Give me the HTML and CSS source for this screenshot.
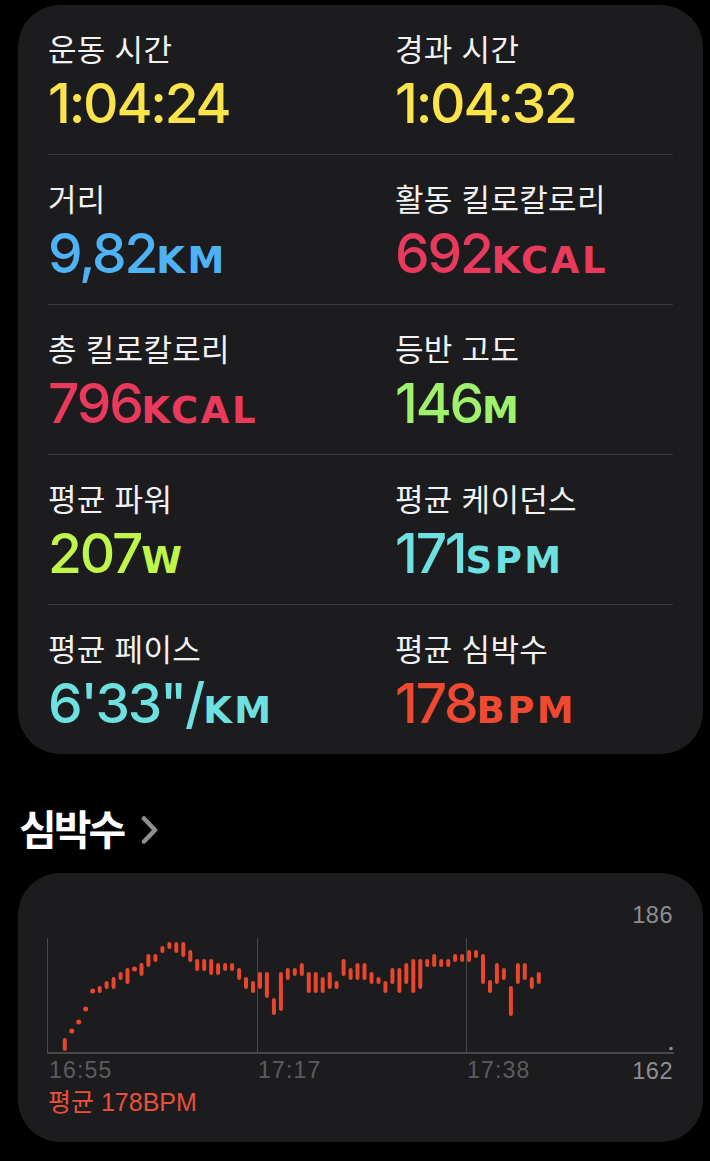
FILE: index.html
```html
<!DOCTYPE html>
<html lang="ko">
<head>
<meta charset="utf-8">
<title>운동 요약</title>
<link rel="stylesheet" href="styles.css">
</head>
<body>
<main class="page">
  <section class="stats">
    <div class="row">
      <div class="cell"><div class="label">운동 시간</div><div class="value c-yellow">1:04:24</div></div>
      <div class="cell"><div class="label">경과 시간</div><div class="value c-yellow">1:04:32</div></div>
    </div>
    <div class="row">
      <div class="cell"><div class="label">거리</div><div class="value c-blue">9,82<span class="unit">KM</span></div></div>
      <div class="cell"><div class="label">활동 킬로칼로리</div><div class="value c-pink">692<span class="unit">KCAL</span></div></div>
    </div>
    <div class="row">
      <div class="cell"><div class="label">총 킬로칼로리</div><div class="value c-pink">796<span class="unit">KCAL</span></div></div>
      <div class="cell"><div class="label">등반 고도</div><div class="value c-green">146<span class="unit">M</span></div></div>
    </div>
    <div class="row">
      <div class="cell"><div class="label">평균 파워</div><div class="value c-lime">207<span class="unit">W</span></div></div>
      <div class="cell"><div class="label">평균 케이던스</div><div class="value c-cyan">171<span class="unit">SPM</span></div></div>
    </div>
    <div class="row">
      <div class="cell"><div class="label">평균 페이스</div><div class="value c-cyan">6'33"/<span class="unit">KM</span></div></div>
      <div class="cell"><div class="label">평균 심박수</div><div class="value c-red">178<span class="unit">BPM</span></div></div>
    </div>
  </section>

  <h2 class="heading">심박수<svg class="chev" width="17" height="30" viewBox="0 0 17 30"><path d="M3 3.5 L14 15 L3 26.5" fill="none" stroke="#8e8e93" stroke-width="4.5" stroke-linecap="round" stroke-linejoin="round"/></svg></h2>

  <section class="chart-card">
    <svg class="chart" width="685" height="215" viewBox="0 0 685 215">
      <g transform="translate(-18 -873)">
        <g class="grid" stroke="#48484b" stroke-width="1">
          <line x1="47.5" y1="938" x2="47.5" y2="1053"/>
          <line x1="257.5" y1="938" x2="257.5" y2="1053"/>
          <line x1="466.5" y1="938" x2="466.5" y2="1053"/>
          <line x1="47" y1="1053" x2="674" y2="1053" stroke-width="2"/>
        </g>
        <circle cx="671" cy="1048.5" r="1.8" fill="#8e8e93"/>
        <g class="bars" fill="#e9472d" transform="translate(-0.2 0)">
          <rect x="63" y="1038" width="4" height="13" rx="2"/>
          <circle cx="72.0" cy="1031" r="2.5"/>
          <circle cx="78.9" cy="1022" r="2.5"/>
          <circle cx="85.9" cy="1009" r="2.5"/>
          <circle cx="92.9" cy="991" r="2.5"/>
          <rect x="97.9" y="986" width="4" height="7" rx="2"/>
          <rect x="104.8" y="981" width="4" height="8" rx="2"/>
          <rect x="111.8" y="977" width="4" height="12" rx="2"/>
          <rect x="118.8" y="972" width="4" height="8" rx="2"/>
          <rect x="125.7" y="968" width="4" height="16" rx="2"/>
          <circle cx="134.7" cy="969" r="2.5"/>
          <rect x="139.7" y="963" width="4" height="13" rx="2"/>
          <rect x="146.6" y="954" width="4" height="13" rx="2"/>
          <rect x="153.6" y="954" width="4" height="8" rx="2"/>
          <rect x="160.6" y="946" width="4" height="7" rx="2"/>
          <rect x="167.6" y="942" width="4" height="7" rx="2"/>
          <rect x="174.5" y="942" width="4" height="11" rx="2"/>
          <rect x="181.5" y="942" width="4" height="15" rx="2"/>
          <rect x="188.5" y="950" width="4" height="12" rx="2"/>
          <rect x="195.4" y="959" width="4" height="12" rx="2"/>
          <rect x="202.4" y="959" width="4" height="12" rx="2"/>
          <rect x="209.4" y="959" width="4" height="16" rx="2"/>
          <rect x="216.3" y="963" width="4" height="12" rx="2"/>
          <rect x="223.3" y="963" width="4" height="8" rx="2"/>
          <rect x="230.3" y="963" width="4" height="8" rx="2"/>
          <rect x="237.3" y="968" width="4" height="12" rx="2"/>
          <rect x="244.2" y="977" width="4" height="12" rx="2"/>
          <rect x="251.2" y="981" width="4" height="12" rx="2"/>
          <rect x="258.2" y="972" width="4" height="17" rx="2"/>
          <rect x="265.1" y="972" width="4" height="26" rx="2"/>
          <rect x="272.1" y="998" width="4" height="17" rx="2"/>
          <rect x="279.1" y="972" width="4" height="39" rx="2"/>
          <rect x="286.0" y="968" width="4" height="12" rx="2"/>
          <rect x="293.0" y="968" width="4" height="8" rx="2"/>
          <rect x="300.0" y="963" width="4" height="13" rx="2"/>
          <rect x="307.0" y="972" width="4" height="21" rx="2"/>
          <rect x="313.9" y="972" width="4" height="21" rx="2"/>
          <rect x="320.9" y="977" width="4" height="16" rx="2"/>
          <rect x="327.9" y="972" width="4" height="17" rx="2"/>
          <rect x="334.8" y="981" width="4" height="8" rx="2"/>
          <rect x="341.8" y="959" width="4" height="17" rx="2"/>
          <rect x="348.8" y="968" width="4" height="12" rx="2"/>
          <rect x="355.7" y="963" width="4" height="17" rx="2"/>
          <rect x="362.7" y="963" width="4" height="17" rx="2"/>
          <rect x="369.7" y="972" width="4" height="12" rx="2"/>
          <rect x="376.7" y="977" width="4" height="7" rx="2"/>
          <rect x="383.6" y="981" width="4" height="12" rx="2"/>
          <rect x="390.6" y="968" width="4" height="16" rx="2"/>
          <rect x="397.6" y="968" width="4" height="25" rx="2"/>
          <rect x="404.5" y="963" width="4" height="21" rx="2"/>
          <rect x="411.5" y="959" width="4" height="34" rx="2"/>
          <rect x="418.5" y="959" width="4" height="30" rx="2"/>
          <rect x="425.4" y="959" width="4" height="8" rx="2"/>
          <rect x="432.4" y="954" width="4" height="13" rx="2"/>
          <rect x="439.4" y="959" width="4" height="8" rx="2"/>
          <rect x="446.4" y="959" width="4" height="8" rx="2"/>
          <rect x="453.3" y="954" width="4" height="8" rx="2"/>
          <rect x="460.3" y="954" width="4" height="8" rx="2"/>
          <rect x="467.3" y="950" width="4" height="12" rx="2"/>
          <rect x="474.2" y="950" width="4" height="8" rx="2"/>
          <rect x="481.2" y="954" width="4" height="30" rx="2"/>
          <rect x="488.2" y="980" width="4" height="13" rx="2"/>
          <rect x="495.1" y="963" width="4" height="21" rx="2"/>
          <rect x="502.1" y="968" width="4" height="12" rx="2"/>
          <rect x="509.1" y="986" width="4" height="30" rx="2"/>
          <rect x="516.1" y="963" width="4" height="21" rx="2"/>
          <rect x="523.0" y="963" width="4" height="17" rx="2"/>
          <rect x="530.0" y="977" width="4" height="12" rx="2"/>
          <rect x="537.0" y="972" width="4" height="12" rx="2"/>
        </g>
        <text class="axis-max" x="673" y="923" text-anchor="end">186</text>
        <text class="axis-max" x="673" y="1079" text-anchor="end">162</text>
        <text class="axis-time" x="49" y="1078">16:55</text>
        <text class="axis-time" x="258" y="1078">17:17</text>
        <text class="axis-time" x="467" y="1078">17:38</text>
      </g>
    </svg>
    <p class="avg">평균 178BPM</p>
  </section>
</main>
</body>
</html>
```
FILE: styles.css
```css
* { box-sizing: border-box; }

body {
  margin: 0;
  background: #000;
  color: #f2f2f2;
  font-family: "Noto Sans CJK KR", sans-serif;
}

.page {
  padding: 5px 7px 0 18px;
}

.stats {
  background: #1c1c1e;
  border-radius: 42px;
  padding: 0 30px;
}

.row {
  display: grid;
  grid-template-columns: 347px 1fr;
  padding: 25px 0 21px;
  border-bottom: 1px solid #38383a;
}

.row:last-child {
  border-bottom: none;
}

.label {
  font: 400 31px/36px "Noto Sans CJK KR", sans-serif;
  letter-spacing: 0.3px;
  color: #f2f2f2;
}

.value {
  margin-top: 7px;
  font: 500 55px/60px Inter, Roboto, "Liberation Sans", sans-serif;
  letter-spacing: -2.2px;
  white-space: nowrap;
}

.unit {
  font: 700 37px/1 "DejaVu Sans", sans-serif;
  letter-spacing: 2.5px;
}

.c-yellow { color: #fbe34b; }
.c-blue { color: #4fb2f5; }
.c-pink { color: #e93a5b; }
.c-green { color: #9ff16d; }
.c-lime { color: #c0f54b; }
.c-cyan { color: #6de0df; }
.c-red { color: #ef4a31; }

.heading {
  display: flex;
  align-items: center;
  margin: 49px 0 22px 1px;
  font: 700 41px/48px "Noto Sans CJK KR", sans-serif;
  letter-spacing: -3px;
  color: #fff;
}

.chev {
  margin: 5px 0 0 18px;
}

.chart-card {
  background: #1c1c1e;
  border-radius: 42px;
  padding: 0 0 26px;
}

.chart {
  display: block;
}

.axis-max {
  font: 400 23.5px "Liberation Sans", sans-serif;
  fill: #8e8e93;
  letter-spacing: 0.5px;
}

.axis-time {
  font: 400 23px "Liberation Sans", sans-serif;
  fill: #5c5c60;
  letter-spacing: 1.2px;
}

.avg {
  margin: 0;
  padding-left: 30px;
  font: 400 25px/28px "Liberation Sans", "Noto Sans CJK KR", sans-serif;
  color: #e9503a;
}
```
